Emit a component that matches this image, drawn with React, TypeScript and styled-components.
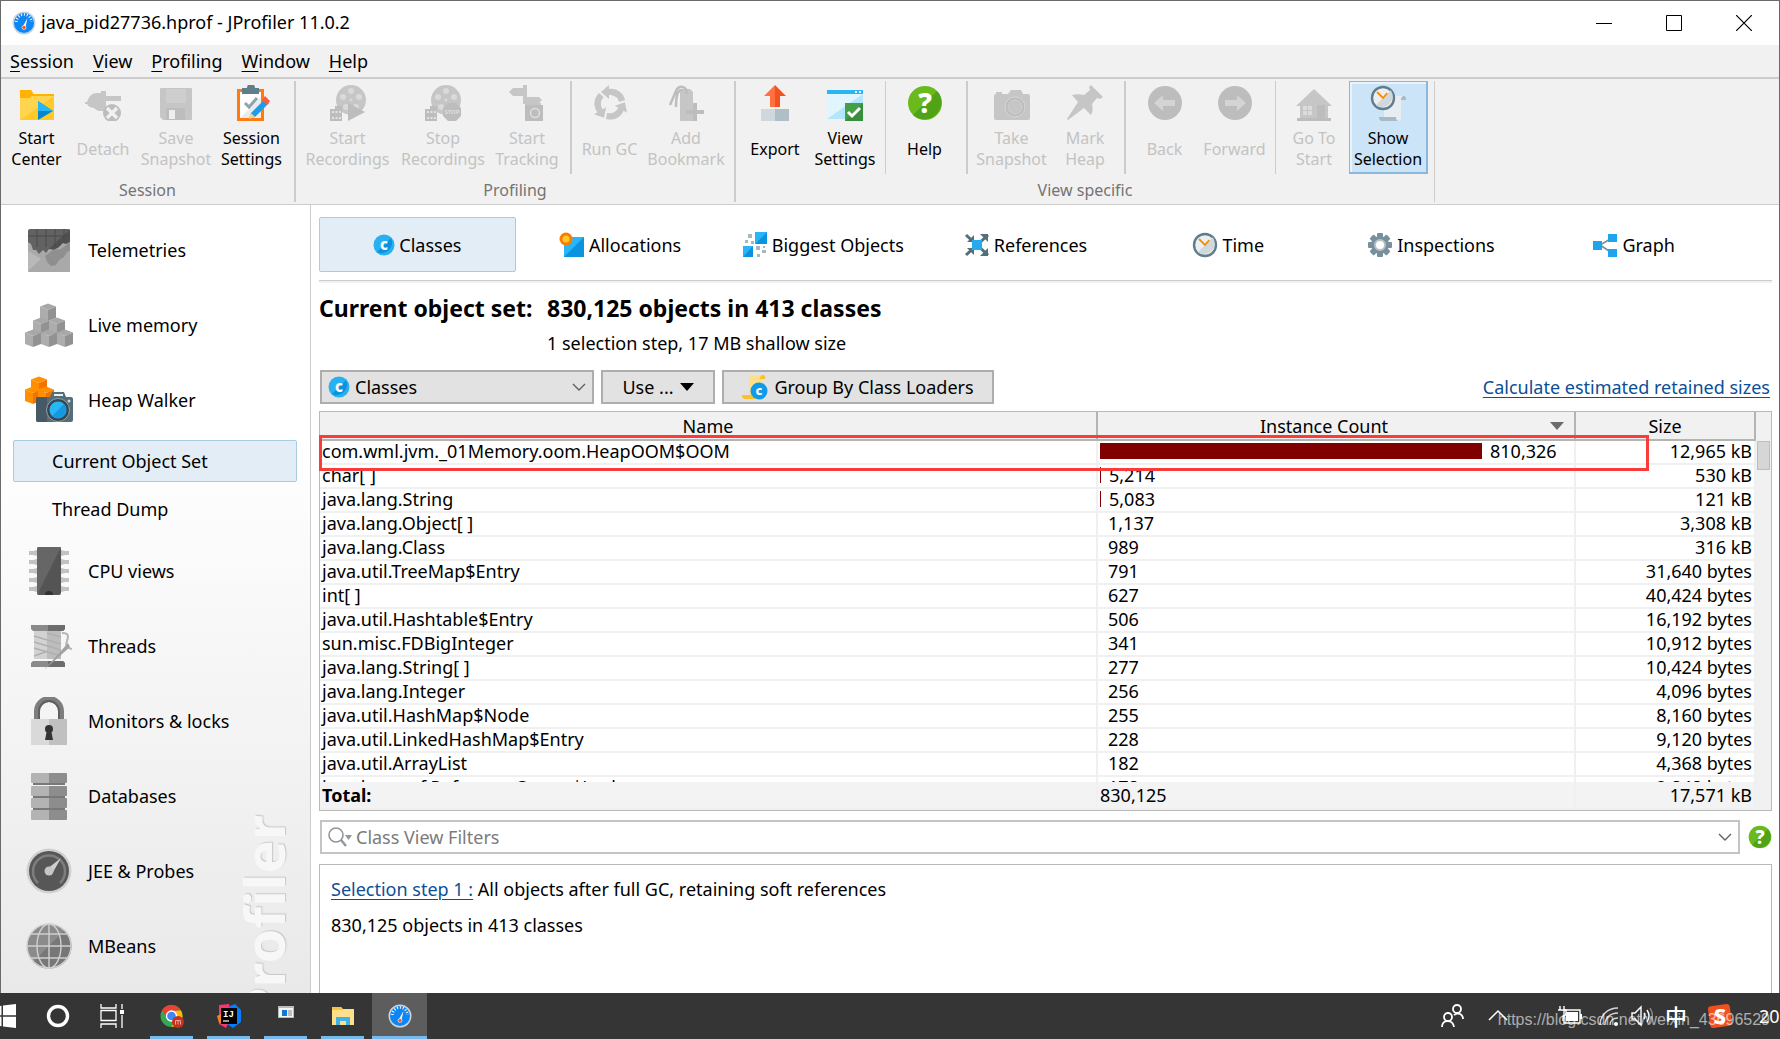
import React from "react";
import styled, { createGlobalStyle, css } from "styled-components";

const GlobalStyle = createGlobalStyle`
  *, *::before, *::after { box-sizing: border-box; }
  html, body, #root { height: 100%; }
  body {
    margin: 0;
    overflow: hidden;
    background: #fff;
    color: #000;
    font-family: "Noto Sans", "Open Sans", "Noto Sans CJK SC", sans-serif;
    font-size: 18px;
    line-height: 24px;
  }
  button, select, input { font: inherit; color: inherit; margin: 0; }
  svg { display: block; flex: none; }
`;

/* ---------- window ---------- */

const Desktop = styled.div`
  display: flex;
  flex-direction: column;
  height: 100vh;
`;

const AppWindow = styled.div`
  flex: 1;
  min-height: 0;
  display: flex;
  flex-direction: column;
  border: 1px solid #6a6a6a;
  border-bottom: 0;
`;

const TitleBar = styled.header`
  display: flex;
  align-items: center;
  height: 44px;
  padding-left: 11px;
  gap: 5px;
`;

const Title = styled.h1`
  flex: 1;
  margin: 0;
  padding-bottom: 2px;
  font-size: 18px;
  font-weight: 400;
`;

const WindowControls = styled.div`
  display: flex;
`;

const WindowButton = styled.button`
  display: flex;
  align-items: center;
  justify-content: center;
  width: 70px;
  height: 44px;
  padding: 0;
  border: 0;
  background: none;
`;

const MenuBar = styled.nav`
  display: flex;
  gap: 19px;
  height: 34px;
  padding: 4px 9px;
  background: #f1f1f1;
  border-bottom: 2px solid #ccc;
`;

const MenuItem = styled.button`
  padding: 0;
  border: 0;
  background: none;
  u { text-decoration-thickness: 1px; text-underline-offset: 3px; }
`;

/* ---------- toolbar ---------- */

const Toolbar = styled.div`
  display: flex;
  height: 126px;
  padding: 2px 0;
  background: #f1f1f1;
  border-bottom: 1px solid #ccc;
`;

const ToolGroup = styled.div<{ $thin?: boolean }>`
  display: flex;
  flex-direction: column;
  align-items: stretch;
  border-right: ${(p) => (p.$thin ? 1 : 2)}px solid #ccc;
`;

const ToolRow = styled.div`
  display: flex;
  height: 94px;
`;

const ToolSet = styled.div<{ $divider?: number }>`
  display: flex;
  padding: 0 6px 0 3px;
  border-right: ${(p) => p.$divider || 0}px solid #ccc;
`;

const ToolButton = styled.button<{ $width: number; $pressed?: boolean }>`
  display: flex;
  flex-direction: column;
  align-items: center;
  gap: 7px;
  width: ${(p) => p.$width}px;
  padding: 3px 0 0;
  border: 1px solid transparent;
  background: none;
  font-size: 16px;
  line-height: 21px;
  white-space: nowrap;
  &:disabled { color: #c3c3c3; }
  ${(p) =>
    p.$pressed &&
    css`
      border: 1px solid #8ab8dc;
      border-bottom-width: 2px;
      border-right-width: 2px;
      background: #cce4f7;
      box-shadow: inset 2px 2px 0 #e9f3fb;
    `}
`;

const ToolLabel = styled.span`
  display: flex;
  flex-direction: column;
  justify-content: center;
  height: 42px;
`;

const GroupLabel = styled.div`
  padding-top: 4px;
  color: #747474;
  font-size: 16px;
  line-height: 24px;
  text-align: center;
`;

/* ---------- body ---------- */

const Body = styled.div`
  flex: 1;
  min-height: 0;
  display: flex;
`;

const Sidebar = styled.nav`
  position: relative;
  flex: 0 0 310px;
  padding-top: 7px;
  overflow: hidden;
  border-right: 1px solid #ccc;
  background: linear-gradient(#fff 0%, #fff 30%, #e9e9e9 100%);
`;

const SideItem = styled.button`
  display: flex;
  align-items: center;
  gap: 15px;
  width: 100%;
  height: 75px;
  padding: 0 24px;
  border: 0;
  background: none;
  text-align: left;
`;

const SubItems = styled.div`
  display: flex;
  flex-direction: column;
  gap: 6px;
  padding: 3px 13px 3px 12px;
`;

const SubItem = styled.button<{ $selected?: boolean }>`
  height: 42px;
  padding: 0 38px;
  border: 1px solid ${(p) => (p.$selected ? "#a9cbe4" : "transparent")};
  border-radius: 2px;
  background: ${(p) => (p.$selected ? "#e3edf6" : "none")};
  text-align: left;
`;

const Brand = styled.div`
  position: absolute;
  right: 18px;
  top: 610px;
  writing-mode: vertical-rl;
  transform: rotate(180deg);
  color: #f7f7f7;
  font-size: 56px;
  font-weight: 700;
  line-height: 58px;
  text-shadow: 1px 1px 1px #c8c8c8;
  pointer-events: none;
`;

const Main = styled.main`
  flex: 1;
  min-width: 0;
  display: flex;
  flex-direction: column;
  padding: 12px 7px 0 8px;
`;

const Tabs = styled.div`
  display: flex;
  gap: 6px;
  padding: 0 40px 8px 0;
  border-bottom: 1px solid #ccc;
  box-shadow: 0 2px 0 #f1f1f1;
`;

const Tab = styled.button<{ $active?: boolean }>`
  flex: 1 1 0;
  display: flex;
  align-items: center;
  justify-content: center;
  gap: 4px;
  height: 55px;
  padding: 0;
  border: 1px solid ${(p) => (p.$active ? "#a9cbe4" : "transparent")};
  border-radius: 2px;
  background: ${(p) => (p.$active ? "#e3edf6" : "none")};
  white-space: nowrap;
`;

const Summary = styled.section`
  display: grid;
  grid-template-columns: 214px 1fr;
  column-gap: 14px;
  row-gap: 9px;
  padding-top: 13px;
`;

const Heading = styled.h2`
  margin: 0;
  font-size: 23px;
  font-weight: 700;
  line-height: 28px;
  white-space: nowrap;
`;

const SummaryNote = styled.p`
  grid-column: 2;
  margin: 0;
`;

const Controls = styled.div`
  display: flex;
  align-items: center;
  gap: 7px;
  padding: 15px 2px 7px 1px;
`;

const frame = css`
  display: flex;
  align-items: center;
  height: 34px;
  border: 2px solid #adadad;
  background: #e2e2e2;
`;

const Dropdown = styled.label`
  ${frame}
  width: 274px;
  gap: 5px;
  padding: 0 6px;
`;

const DropdownSelect = styled.select`
  flex: 1;
  padding: 0;
  border: 0;
  outline: 0;
  background: transparent;
  appearance: none;
`;

const PushButton = styled.button<{ $width: number }>`
  ${frame}
  justify-content: center;
  gap: 6px;
  width: ${(p) => p.$width}px;
  padding: 0;
  white-space: nowrap;
`;

const Link = styled.a`
  color: #0b4f96;
  text-decoration-thickness: 1px;
  text-underline-offset: 3px;
`;

const RetainedLink = styled(Link)`
  margin-left: auto;
`;

/* ---------- table ---------- */

const TableFrame = styled.section`
  position: relative;
  flex: 1;
  min-height: 0;
  display: flex;
  border: 1px solid #b9b9b9;
`;

const TableViewport = styled.div`
  flex: 1;
  overflow: hidden;
`;

const DataTable = styled.table`
  width: 100%;
  table-layout: fixed;
  border-collapse: separate;
  border-spacing: 0;
`;

const NumberCol = styled.col<{ $width: number }>`
  width: ${(p) => p.$width}px;
`;

const HeadCell = styled.th`
  height: 29px;
  padding: 3px 0 2px;
  border-right: 2px solid #b4b4b0;
  border-bottom: 2px solid #b4b4b0;
  background: #f1f1f1;
  font-weight: 400;
  line-height: 22px;
`;

const SortableHead = styled.div`
  display: grid;
  grid-template-columns: 1fr 20px;
  align-items: center;
  padding-right: 4px;
`;

const Cell = styled.td<{ $right?: boolean }>`
  height: 24px;
  padding: 0 2px 2px;
  border-right: 2px solid #f0f0f0;
  border-bottom: 2px solid #f0f0f0;
  line-height: 20px;
  text-align: ${(p) => (p.$right ? "right" : "left")};
  white-space: nowrap;
`;

const CountCell = styled.div`
  display: flex;
  align-items: center;
  gap: 7px;
`;

const Bar = styled.span`
  height: 16px;
  border-right: 1px solid #fff;
  background: #800000;
`;

const TotalCell = styled(Cell)<{ $bold?: boolean }>`
  position: sticky;
  bottom: 0;
  height: 28px;
  padding: 2px;
  background: #f3f3f3;
  font-weight: ${(p) => (p.$bold ? 700 : 400)};
`;

const ScrollTrack = styled.div`
  width: 15px;
  padding: 29px 1px 0;
  background: #f1f1f1;
`;

const ScrollThumb = styled.div`
  height: 29px;
  border: 1px solid #bdbdbd;
  background: #d6d6d6;
`;

const Highlight = styled.div`
  position: absolute;
  left: -1px;
  top: 23px;
  right: 122px;
  height: 36px;
  border: 3px solid #fb3a3a;
  pointer-events: none;
`;

/* ---------- filter and details ---------- */

const FilterRow = styled.div`
  display: flex;
  align-items: center;
  gap: 8px;
  padding: 9px 0 10px 1px;
`;

const FilterBox = styled.label`
  flex: 1;
  display: flex;
  align-items: center;
  gap: 4px;
  height: 34px;
  padding: 0 6px;
  border: 2px solid #c4c4c4;
`;

const FilterInput = styled.input`
  flex: 1;
  padding: 0;
  border: 0;
  outline: 0;
  &::placeholder { color: #7b7b7b; opacity: 1; }
`;

const IconButton = styled.button`
  padding: 0;
  border: 0;
  background: none;
`;

const Details = styled.section`
  flex: 0 0 129px;
  display: flex;
  flex-direction: column;
  gap: 12px;
  padding: 12px 11px;
  border: 1px solid #b9b9b9;
  border-bottom: 0;
  p { margin: 0; }
`;

/* ---------- taskbar ---------- */

const Taskbar = styled.footer`
  position: relative;
  display: flex;
  justify-content: space-between;
  height: 46px;
  overflow: hidden;
  background: #353535;
`;

const TaskSide = styled.div`
  display: flex;
`;

const Task = styled.button<{ $width: number; $after?: number }>`
  display: flex;
  align-items: center;
  justify-content: center;
  width: ${(p) => p.$width}px;
  margin-right: ${(p) => p.$after || 0}px;
  padding: 0;
  border: 0;
  background: none;
  color: #fff;
`;

const RunningTask = styled(Task)<{ $active?: boolean }>`
  padding-top: 3px;
  border-bottom: 3px solid #76b9ed;
  background: ${(p) => (p.$active ? "#5d5d5d" : "none")};
`;

const TrayText = styled.span`
  display: flex;
  align-items: center;
  justify-content: center;
  width: 44px;
  color: #fff;
  font-size: 22px;
  font-weight: 500;
`;

const Clock = styled.span`
  align-self: center;
  width: 38px;
  padding-left: 17px;
  overflow: hidden;
  color: #fff;
`;

const UrlMark = styled.span`
  position: absolute;
  right: 10px;
  bottom: 7px;
  color: rgba(255, 255, 255, 0.6);
  font-family: "Liberation Sans", Arial, sans-serif;
  font-size: 16px;
`;

/* ---------- icons ---------- */

const GREY = "#c6c6c6";
const GREY_DARK = "#bdbdbd";
const GREY_LIGHT = "#d6d6d6";

const Svg = ({ s, children }: { s: number; children: React.ReactNode }) => (
  <svg width={s} height={s} viewBox={`0 0 ${s} ${s}`} aria-hidden="true">
    {children}
  </svg>
);

const GaugeLogo = () => (
  <Svg s={24}>
    <circle cx="12" cy="12" r="11.5" fill="#c9d3dc" />
    <circle cx="12" cy="12" r="10" fill="#0d86f5" />
    <path d="M4.500 11a7.500 7.500 0 0 1 15 0" fill="none" stroke="#fff" strokeWidth="2.600" strokeDasharray="1 1.900" />
    <path d="M15.500 7l-5 9 2.800 1z" fill="#fff" />
    <circle cx="12" cy="16.500" r="2" fill="#f4511e" stroke="#fff" strokeWidth="0.600" />
  </Svg>
);

const StartCenterIcon = () => (
  <Svg s={36}>
    <path d="M1 5h11l3 4h20v26H1z" fill="#ffca28" />
    <path d="M1 5h11l2 4-3 4H1z" fill="#ffb300" />
    <path d="M14 9h21v2H12z" fill="#ffb300" />
    <path d="M1 35V13h10l2-2h22z" fill="#ffd54f" />
    <path d="M19 16v19l15-9z" fill="#0288d1" />
    <path d="M19 16v10h15z" fill="#29b6f6" />
  </Svg>
);

const DetachIcon = () => (
  <Svg s={36}>
    <path d="M0 17h2c2-6 5-9 10-9h4V6h5v5h15v5H21v7h-6c-6 1-11 0-13-4H0z" fill={GREY} />
    <path d="M8 11h13v15h-6c-4 0-7-3-7-7z" fill={GREY} />
    <circle cx="27" cy="28" r="9" fill={GREY_DARK} />
    <path d="M22 23l10 10M32 23L22 33" stroke="#f1f1f1" strokeWidth="3.400" />
  </Svg>
);

const SaveIcon = () => (
  <Svg s={36}>
    <path d="M2 4q0-1 1-1h30q1 0 1 1v30q0 1-1 1H5l-3-3z" fill={GREY} />
    <path d="M8 4h20v14H8z" fill="#cecece" />
    <path d="M8 23h19v12H8z" fill={GREY_DARK} />
    <path d="M11 25h6v9h-6z" fill="#eee" />
  </Svg>
);

const SessionSettingsIcon = () => (
  <Svg s={36}>
    <path d="M3 4h27v32H3z" fill="#ff7a0f" />
    <path d="M6 7h21v26H6z" fill="#fff" />
    <path d="M27 12v21H6z" fill="#e8ecef" />
    <path d="M8 9V3h5a4 4 0 0 1 8 0h4v6z" fill="#607d8b" />
    <path d="M11 18l4 4 8-9" fill="none" stroke="#90a4ae" strokeWidth="3" />
    <path d="M31 14l4 4-14 14-6 2 2-6z" fill="#1e9be9" />
    <path d="M31 11l5 5-3 4-5-5z" fill="#ff5a3c" />
    <path d="M17 28l4 4-6 2z" fill="#ffd180" />
  </Svg>
);

const FilmReel = () => (
  <>
    <circle cx="21" cy="15" r="15" fill={GREY} />
    <g fill="#dadada">
      <circle cx="21" cy="6" r="3" />
      <circle cx="13" cy="12" r="3" />
      <circle cx="29" cy="12" r="3" />
      <circle cx="16" cy="22" r="3" />
      <circle cx="26" cy="22" r="3" />
      <circle cx="21" cy="15" r="1.400" />
    </g>
    <path d="M0 24h5v-3h7v15H0z" fill={GREY_DARK} />
    <path d="M2 27h9M2 33h9" stroke="#eee" strokeWidth="1.500" strokeDasharray="2 1.500" />
  </>
);

const StartRecIcon = () => (
  <Svg s={36}>
    <FilmReel />
    <path d="M18 18v18l17-9z" fill={GREY_DARK} />
  </Svg>
);

const StopRecIcon = () => (
  <Svg s={36}>
    <FilmReel />
    <path d="M23 18h8l5 5v8l-5 5h-8l-5-5v-8z" fill={GREY_DARK} />
    <text x="27" y="29" fontSize="6" fontWeight="700" textAnchor="middle" fill="#dedede">STOP</text>
  </Svg>
);

const TrackingIcon = () => (
  <Svg s={36}>
    <path d="M0 7l4-4h10V0h4v12h12l3 3-3 3h2v18H16V19h-2v-8H4z" fill={GREY} />
    <path d="M16 20h18v16H16z" fill={GREY_DARK} />
    <circle cx="26" cy="28" r="4.500" fill="none" stroke="#dedede" strokeWidth="1.500" />
  </Svg>
);

const RunGcIcon = () => (
  <Svg s={36}>
    <g fill={GREY}>
      {[0, 120, 240].map((a) => (
        <g key={a} transform={`rotate(${a} 18 19)`}>
          <path d="M17 0v4c7-1 14 3 16 11l-6 2c-1-5-5-7-10-7v4L9 7z" />
        </g>
      ))}
    </g>
  </Svg>
);

const BookmarkIcon = () => (
  <Svg s={36}>
    <path d="M12 7l3-3h7l3 3v29H12z" fill={GREY} />
    <path d="M19 9c0-8-8-10-11-3L2 20M15 5C9 4 8 12 8 22" fill="none" stroke={GREY_DARK} strokeWidth="2.500" />
    <path d="M25 18h4v7h7v4h-7v7h-4v-7h-7v-4h7z" fill={GREY_DARK} />
  </Svg>
);

const ExportIcon = () => (
  <Svg s={36}>
    <path d="M18 0L7 11h6v11h5z" fill="#ff7043" />
    <path d="M18 0l11 11h-6v11h-5z" fill="#f4511e" />
    <path d="M4 24h14v12H4z" fill="#cfd8dc" />
    <path d="M18 24h14v12H18z" fill="#b0bec5" />
  </Svg>
);

const ViewSettingsIcon = () => (
  <Svg s={36}>
    <path d="M0 5h36v29H0z" fill="#b3e5fc" />
    <path d="M0 9h36L0 34z" fill="#e1f5fe" />
    <path d="M0 5h36v4H0z" fill="#29b6f6" />
    <path d="M28 6h2v2h-2zM32 6h2v2h-2z" fill="#fff" />
    <path d="M18 18h18v18H18z" fill="#388e3c" />
    <path d="M18 18h18L18 36z" fill="#43a047" />
    <path d="M21 27l4 4 8-8" fill="none" stroke="#fff" strokeWidth="3" />
  </Svg>
);

const HelpIcon = ({ s = 36 }: { s?: number }) => (
  <svg width={s} height={s} viewBox="0 0 36 36" aria-hidden="true">
    <circle cx="18" cy="18" r="17" fill="#6aba1d" />
    <path d="M30 6A17 17 0 0 1 6 30z" fill="#50a316" />
    <text x="18" y="28" fontSize="28" fontWeight="800" textAnchor="middle" fill="#fff">?</text>
  </svg>
);

const TakeSnapshotIcon = () => (
  <Svg s={36}>
    <path d="M0 11q0-2 2-2V7h6v2h6l3-4h10l2 4h5q2 0 2 2v22q0 2-2 2H2q-2 0-2-2z" fill={GREY} />
    <circle cx="21" cy="22" r="10" fill={GREY_DARK} stroke={GREY_LIGHT} strokeWidth="1" />
    <circle cx="21" cy="22" r="7" fill={GREY} stroke="#d0d0d0" />
  </Svg>
);

const PinIcon = () => (
  <Svg s={36}>
    <path d="M24 0l12 12-3 2-3-1-5 6c1 4 1 7-1 11l-7-7L1 35l-1-1 11-17-6-7c4-1 8-1 12 0l6-5-1-3z" fill={GREY} />
  </Svg>
);

const ArrowIcon = ({ flip }: { flip?: boolean }) => (
  <Svg s={36}>
    <circle cx="18" cy="18" r="17" fill={GREY_DARK} />
    <g transform={flip ? "matrix(-1 0 0 1 36 0)" : undefined}>
      <path d="M7 18l9-8v5h12v6H16v5z" fill="#d4d4d4" />
    </g>
  </Svg>
);

const HomeIcon = () => (
  <Svg s={36}>
    <path d="M18 4l18 17h-4v13H4V21H0z" fill={GREY} />
    <path d="M1 33h34v3H1z" fill={GREY_DARK} />
    <path d="M21 20h8v13h-8z" fill={GREY_DARK} />
    <path d="M7 21h4v4H7zM12 21h4v4h-4zM7 26h4v4H7zM12 26h4v4h-4z" fill="#dcdcdc" />
  </Svg>
);

const ClockFace = ({ cx, cy, r }: { cx: number; cy: number; r: number }) => (
  <>
    <circle cx={cx} cy={cy} r={r - 1} fill="#eceff1" stroke="#607d8b" strokeWidth="2.400" />
    <path
      d={`M${cx + r * 0.65} ${cy - r * 0.65}A${r * 0.9} ${r * 0.9} 0 0 1 ${cx - r * 0.6} ${cy + r * 0.6}z`}
      fill="#cfd8dc"
    />
    <path
      d={`M${cx - r * 0.5} ${cy - r * 0.5}L${cx} ${cy}L${cx + r * 0.35} ${cy - r * 0.4}`}
      fill="none"
      stroke="#fb8c00"
      strokeWidth="1.800"
    />
  </>
);

const ShowSelectionIcon = () => (
  <Svg s={36}>
    <path d="M14 11h20v4h-3v18q0 3-3 3H14z" fill="#e8edf1" />
    <path d="M31 15q0-4 3-4 2 0 2 4zM9 32h17q0 4 3 4H12q-3 0-3-4z" fill="#a9bac4" />
    <ClockFace cx={13} cy={13} r={12} />
  </Svg>
);

const Cube = ({ x, y, c }: { x: number; y: number; c: string[] }) => (
  <g transform={`translate(${x} ${y})`}>
    <path d="M0-8.500L8-5.500 0-2-8-5.500z" fill={c[0]} />
    <path d="M-8-5.500L0-2v11L-8 6z" fill={c[1]} />
    <path d="M8-5.500L0-2v11L8 6z" fill={c[2]} />
  </g>
);

const GREY_CUBE = ["#a8a8a8", "#adadad", "#929292"];
const ORANGE_CUBE = ["#ff9100", "#ff8f00", "#f57200"];

const TelemetriesIcon = () => (
  <Svg s={48}>
    <rect x="3" y="3" width="42" height="43" rx="2" fill="#626262" />
    <path d="M45 3v20H24z" fill="#505050" />
    <path d="M3 10h42M12 3v18M21 3v18M30 3v18M39 3v18" stroke="#4a4a4a" />
    <path d="M3 16l3 2 2 6 3 0 3 4 4-4 3 3 3-4 5 1 5-3 4-4 3 1 4-2v28q0 2-2 2H5q-2 0-2-2z" fill="#a9a9a9" />
    <path d="M20 30l8-6 8-1 9-7v9l-3 1-3 5-5 3-3 5-5 1-4-4z" fill="#8f8f8f" />
    <path d="M3 45V25l13 8z" fill="#b9b9b9" />
  </Svg>
);

const LiveMemoryIcon = () => (
  <Svg s={48}>
    <Cube x={23} y={11} c={GREY_CUBE} />
    <Cube x={16} y={25} c={GREY_CUBE} />
    <Cube x={32} y={25} c={GREY_CUBE} />
    <Cube x={8} y={37} c={GREY_CUBE} />
    <Cube x={24} y={37} c={GREY_CUBE} />
    <Cube x={40} y={37} c={GREY_CUBE} />
  </Svg>
);

const HeapWalkerIcon = () => (
  <Svg s={48}>
    <Cube x={14} y={9} c={ORANGE_CUBE} />
    <Cube x={8} y={19} c={ORANGE_CUBE} />
    <Cube x={21} y={19} c={ORANGE_CUBE} />
    <path d="M11 23q0-2 2-2h12l2-5h12l2 5h5q2 0 2 2v21q0 2-2 2H13q-2 0-2-2z" fill="#546e7a" />
    <path d="M11 23q0-2 2-2h9v25h-9q-2 0-2-2z" fill="#455a64" />
    <path d="M29 18h9v2h-9z" fill="#eceff1" />
    <circle cx="33" cy="34" r="11.500" fill="#37474f" stroke="#90a4ae" />
    <circle cx="33" cy="34" r="8.500" fill="#29b6f6" />
    <path d="M39 28a8.500 8.500 0 0 1-12 12z" fill="#1499e0" />
    <circle cx="44" cy="25" r="1.500" fill="#cfd8dc" />
  </Svg>
);

const CpuIcon = () => (
  <Svg s={48}>
    {[6, 15, 24, 33, 42].map((y) => (
      <path
        key={y}
        d={`M4 ${y - 2}h4l4-1v6l-4-1H4zM44 ${y - 2}h-4l-4-1v6l4-1h4z`}
        fill="#c2c2c2"
      />
    ))}
    <rect x="12" y="0" width="24" height="48" rx="2" fill="#545454" />
    <path d="M12 46V2q0-2 2-2h22L14 44v4q-2 0-2-2z" fill="#666" />
    <path d="M20 48a4 4 0 0 1 8 0z" fill="#333" />
  </Svg>
);

const ThreadsIcon = () => (
  <Svg s={48}>
    <path d="M9 9h27v28H9z" fill="#d2d2d2" />
    <path d="M22 9h14v28H22z" fill="#bdbdbd" />
    <path d="M9 14l27 8M9 20l27 8M9 26l27 8M22 11l14 4M9 34l14-5" stroke="#b0b0b0" strokeWidth="1.500" />
    <path d="M6 3h34v4l-2 2H8L6 7zM6 45h34v-4l-2-2H8l-2 2z" fill="#8a8a8a" />
    <path d="M23 3h17v4l-2 2H23zM23 45h17v-4l-2-2H23z" fill="#6d6d6d" />
    <path d="M37 11c6 0 7 2 5 8-2 5 0 7 5 8" fill="none" stroke="#b4b4b4" strokeWidth="2" />
    <path d="M43 21l2 4-26 23z" fill="#a2a2a2" />
  </Svg>
);

const LockIcon = () => (
  <Svg s={48}>
    <path d="M12 24V14a12 12 0 0 1 24 0v10" fill="none" stroke="#7e7e7e" strokeWidth="6" />
    <path d="M14 24V14a10 10 0 0 1 20 0v10" fill="none" stroke="#606060" strokeWidth="2" />
    <path d="M6 22h36v26H6z" fill="#d9d9d9" />
    <path d="M24 22h18v26H24z" fill="#c0c0c0" />
    <circle cx="24" cy="32" r="4" fill="#333" />
    <path d="M22 33h4l2 10h-8z" fill="#333" />
  </Svg>
);

const DatabaseIcon = () => (
  <Svg s={48}>
    {[1, 14, 26, 38].map((y) => (
      <g key={y}>
        <path d={`M6 ${y + 1}q0-1 1-1h17v10H7q-1 0-1-1z`} fill="#b3b3b3" />
        <path d={`M24 ${y}h17q1 0 1 1v8q0 1-1 1H24z`} fill="#8d8d8d" />
        {y < 38 && <path d={`M8 ${y + 10}h32v2H8z`} fill="#787878" />}
      </g>
    ))}
  </Svg>
);

const ProbesIcon = () => (
  <Svg s={48}>
    <circle cx="24" cy="24" r="22.500" fill="#d0d0d0" />
    <circle cx="24" cy="24" r="20" fill="#575757" />
    <path d="M13 36a16 16 0 1 1 22 0" fill="none" stroke="#7e7e7e" strokeWidth="2.500" />
    <path d="M36 11L27 27l-5-5z" fill="#d0d0d0" />
    <circle cx="24" cy="24" r="4.500" fill="#c6c6c6" />
  </Svg>
);

const MBeansIcon = () => (
  <Svg s={48}>
    <circle cx="24" cy="24" r="22" fill="#8b8b8b" />
    <path d="M40 8A22 22 0 0 1 8 40z" fill="#777" />
    <g fill="none" stroke="#d0d0d0" strokeWidth="1.400">
      <circle cx="24" cy="24" r="22" />
      <ellipse cx="24" cy="24" rx="12" ry="22" />
      <path d="M24 2v44M2 24h44M6 12h36M6 36h36" />
    </g>
  </Svg>
);

const ClassIcon = () => (
  <Svg s={22}>
    <circle cx="11" cy="11" r="10.500" fill="#29b0f0" />
    <path d="M18 4A10.500 10.500 0 0 1 4 18z" fill="#0b93e0" />
    <text x="11" y="16" fontSize="15" fontWeight="800" textAnchor="middle" fill="#fff">c</text>
  </Svg>
);

const AllocationsIcon = () => (
  <Svg s={26}>
    <path d="M5 5h20v20H5z" fill="#0b93e0" />
    <path d="M5 5h20L5 25z" fill="#29b6f6" />
    <circle cx="7" cy="7" r="6.500" fill="#fb7d00" />
    <circle cx="7" cy="7" r="3.500" fill="#ffca28" />
  </Svg>
);

const BiggestIcon = () => (
  <Svg s={26}>
    <path d="M13 0h12v12H13zM1 14h10v11H1z" fill="#29b6f6" />
    <path d="M25 0v12H13zM11 14v11H1z" fill="#0b93e0" />
    <path d="M6 2h4v4H6zM3 8h3v3H3zM9 9h3v3H9zM14 14h4v4h-4zM20 18h4v3h-4zM15 22h3v3h-3zM21 14h2v2h-2z" fill="#a9b7bf" />
  </Svg>
);

const ReferencesIcon = () => (
  <Svg s={26}>
    <path d="M2 3l22 20M24 3L2 23" stroke="#546e7a" strokeWidth="3" />
    <path d="M24 2v8l-8-8zM24 24v-8l-8 8zM10 10V3l-7 7zM10 16v7l-7-7z" fill="#546e7a" />
    <path d="M8 8h10v10H8z" fill="#29a9ee" />
  </Svg>
);

const TimeIcon = () => (
  <Svg s={26}>
    <ClockFace cx={13} cy={13} r={12} />
  </Svg>
);

const GearIcon = () => (
  <Svg s={26}>
    <g fill="#78909c">
      {[0, 45, 90, 135].map((a) => (
        <rect key={a} x="10" y="1" width="6" height="24" rx="1" transform={`rotate(${a} 13 13)`} />
      ))}
      <circle cx="13" cy="13" r="9" />
    </g>
    <circle cx="13" cy="13" r="5" fill="#fff" stroke="#b7c3c9" strokeWidth="2" />
  </Svg>
);

const GraphIcon = () => (
  <Svg s={26}>
    <path d="M20 6L8 13l12 8" fill="none" stroke="#78909c" strokeWidth="1.600" />
    <path d="M1 9h9v9H1zM16 2h9v8h-9zM16 17h9v8h-9z" fill="#1ea5ee" />
  </Svg>
);

const LoaderIcon = () => (
  <Svg s={26}>
    <path d="M7 1h14v4h-2v20H3q-2 0-2-4h6z" fill="#ffdf87" />
    <path d="M0 21h13v4H3q-3 0-3-4zM18 5q0-4 3-4t2 4z" fill="#fbc02d" />
    <g transform="translate(8 7)">
      <circle cx="9" cy="10" r="8.500" fill="#0f9be8" />
      <text x="9" y="14" fontSize="13" fontWeight="800" textAnchor="middle" fill="#fff">c</text>
    </g>
  </Svg>
);

const ChevronDown = () => (
  <svg width="14" height="9" viewBox="0 0 14 9" aria-hidden="true">
    <path d="M1 1l6 6 6-6" fill="none" stroke="#606060" strokeWidth="1.400" />
  </svg>
);

const Triangle = ({ fill }: { fill: string }) => (
  <svg width="14" height="8" viewBox="0 0 14 8" aria-hidden="true">
    <path d="M0 0h14L7 8z" fill={fill} />
  </svg>
);

const SearchIcon = () => (
  <svg width="24" height="20" viewBox="0 0 24 20" aria-hidden="true">
    <circle cx="8" cy="8" r="7" fill="none" stroke="#8e979d" strokeWidth="1.600" />
    <path d="M13 13l5 6" stroke="#8e979d" strokeWidth="2.400" />
    <path d="M17 8h7l-3.500 5z" fill="#8e979d" />
  </svg>
);

const WindowsIcon = () => (
  <svg width="16" height="24" viewBox="0 0 16 24" aria-hidden="true">
    <path d="M0 2l1.500-.3v9.500H0zM3 1.500L16 0v11.300H3zM0 12.700h1.500v9.500L0 22zM3 12.700h13V24L3 22.400z" fill="#fff" />
  </svg>
);

const CortanaIcon = () => (
  <Svg s={24}>
    <circle cx="12" cy="12" r="9.500" fill="none" stroke="#fff" strokeWidth="3.400" />
  </Svg>
);

const TaskViewIcon = () => (
  <Svg s={26}>
    <path d="M2 1v4h15V1M2 25v-4h15v4M2 7.500h15v10H2zM23 1v5M23 12v13" fill="none" stroke="#fff" strokeWidth="1.300" />
    <path d="M21 7h4v4h-4z" fill="#fff" />
  </Svg>
);

const ChromeIcon = () => (
  <Svg s={24}>
    <circle cx="11.500" cy="12" r="11" fill="#34a853" />
    <path d="M2 6.500A11 11 0 0 1 21 6.500L12 7 7 14z" fill="#ea4335" />
    <path d="M21 6.500A11 11 0 0 1 11.500 23l4.500-9-4-7z" fill="#fbbc05" />
    <circle cx="11.500" cy="12" r="5" fill="#4285f4" stroke="#fff" strokeWidth="1.400" />
    <circle cx="18" cy="18" r="6" fill="#c5311c" />
    <path d="M15.500 20.500v-4h5v4M18 17v3.500" fill="none" stroke="#f2a398" />
  </Svg>
);

const IntellijIcon = () => (
  <Svg s={24}>
    <path d="M2 1l10-1 3 12-6 12-7-4z" fill="#f9356f" />
    <path d="M0 12l6-3 2 8-6 2z" fill="#fc801d" />
    <path d="M13 2l5-2 6 6v12l-8 6-6-4z" fill="#087cfa" />
    <path d="M4 4h16v16H4z" fill="#000" />
    <text x="6" y="13" fontSize="9" fontWeight="700" fontFamily="Liberation Mono, monospace" fill="#fff">IJ</text>
    <path d="M6 17h6" stroke="#fff" strokeWidth="1.200" />
  </Svg>
);

const PanelIcon = () => (
  <Svg s={24}>
    <path d="M4 2h16v12H4z" fill="#b9bdc1" />
    <path d="M5 4h14v9H5z" fill="#f5f5f5" />
    <path d="M8 6h5v6H8z" fill="#1278d4" />
    <path d="M14 7h4M14 9h4M14 11h4" stroke="#888" />
  </Svg>
);

const ExplorerIcon = () => (
  <Svg s={24}>
    <path d="M1 3h9l2 2h11v16H1z" fill="#ffe08a" />
    <path d="M1 3h9l2 3H1z" fill="#f8c43a" />
    <path d="M5 21v-8h14v8h-4v-4H9v4z" fill="#3fb2e8" />
  </Svg>
);

const PeopleIcon = () => (
  <Svg s={24}>
    <g fill="none" stroke="#fff" strokeWidth="1.800">
      <circle cx="16" cy="5" r="4" />
      <circle cx="7" cy="13" r="4" />
      <path d="M1 23c0-8 11-8 12 0M13 11c4-3 9-1 9 4" />
    </g>
  </Svg>
);

const TrayChevron = () => (
  <Svg s={20}>
    <path d="M1 14l9-9 9 9" fill="none" stroke="#fff" strokeWidth="1.500" />
  </Svg>
);

const BatteryIcon = () => (
  <Svg s={24}>
    <path d="M6 6h16v13H6z" fill="none" stroke="#fff" strokeWidth="1.400" />
    <path d="M8 8h12v9H8zM22 10h2v5h-2z" fill="#fff" />
    <path d="M2 2v4M6 2v4M0 6h8v3q0 3-3 3v5" fill="none" stroke="#fff" strokeWidth="1.400" />
  </Svg>
);

const WifiIcon = () => (
  <Svg s={22}>
    <g fill="none" stroke="#d5d5d5" strokeWidth="1.400">
      <path d="M2 20C2 10 10 3 20 3M7 20c0-7 5-12 13-12M12 20c0-4 3-7 8-7" />
    </g>
    <circle cx="18" cy="19" r="2" fill="#fff" />
  </Svg>
);

const SpeakerIcon = () => (
  <Svg s={22}>
    <g fill="none" stroke="#fff" strokeWidth="1.400">
      <path d="M1 8h3l6-6v18l-6-6H1zM13 8q2 3 0 6M16 5q4 6 0 12" />
      <path d="M19 3q5 8 0 16" stroke="#888" />
    </g>
  </Svg>
);

const SogouIcon = () => (
  <Svg s={26}>
    <rect x="2" y="2" width="22" height="22" rx="3" fill="#f0501e" transform="rotate(-8 13 13)" />
    <text x="13" y="21" fontSize="22" fontWeight="800" textAnchor="middle" fill="#fff">S</text>
  </Svg>
);

/* ---------- data ---------- */

type Tool = { lines: string[]; width: number; icon: React.ReactNode; on?: boolean; pressed?: boolean };
type ToolSetData = { divider?: number; tools: Tool[] };

const toolGroups: { label: string; thin?: boolean; sets: ToolSetData[] }[] = [
  {
    label: "Session",
    sets: [
      {
        tools: [
          { lines: ["Start", "Center"], width: 65, icon: <StartCenterIcon />, on: true },
          { lines: ["Detach"], width: 68, icon: <DetachIcon /> },
          { lines: ["Save", "Snapshot"], width: 78, icon: <SaveIcon /> },
          { lines: ["Session", "Settings"], width: 73, icon: <SessionSettingsIcon />, on: true },
        ],
      },
    ],
  },
  {
    label: "Profiling",
    sets: [
      {
        divider: 2,
        tools: [
          { lines: ["Start", "Recordings"], width: 97, icon: <StartRecIcon /> },
          { lines: ["Stop", "Recordings"], width: 94, icon: <StopRecIcon /> },
          { lines: ["Start", "Tracking"], width: 74, icon: <TrackingIcon /> },
        ],
      },
      {
        tools: [
          { lines: ["Run GC"], width: 69, icon: <RunGcIcon /> },
          { lines: ["Add", "Bookmark"], width: 84, icon: <BookmarkIcon /> },
        ],
      },
    ],
  },
  {
    label: "View specific",
    thin: true,
    sets: [
      {
        divider: 1,
        tools: [
          { lines: ["Export"], width: 72, icon: <ExportIcon />, on: true },
          { lines: ["View", "Settings"], width: 68, icon: <ViewSettingsIcon />, on: true },
        ],
      },
      { divider: 2, tools: [{ lines: ["Help"], width: 71, icon: <HelpIcon />, on: true }] },
      {
        divider: 2,
        tools: [
          { lines: ["Take", "Snapshot"], width: 81, icon: <TakeSnapshotIcon /> },
          { lines: ["Mark", "Heap"], width: 66, icon: <PinIcon /> },
        ],
      },
      {
        divider: 1,
        tools: [
          { lines: ["Back"], width: 71, icon: <ArrowIcon /> },
          { lines: ["Forward"], width: 69, icon: <ArrowIcon flip /> },
        ],
      },
      {
        tools: [
          { lines: ["Go To", "Start"], width: 70, icon: <HomeIcon /> },
          { lines: ["Show", "Selection"], width: 79, icon: <ShowSelectionIcon />, on: true, pressed: true },
        ],
      },
    ],
  },
];

const sideTop = [
  { label: "Telemetries", icon: <TelemetriesIcon /> },
  { label: "Live memory", icon: <LiveMemoryIcon /> },
  { label: "Heap Walker", icon: <HeapWalkerIcon /> },
];

const sideBottom = [
  { label: "CPU views", icon: <CpuIcon /> },
  { label: "Threads", icon: <ThreadsIcon /> },
  { label: "Monitors & locks", icon: <LockIcon /> },
  { label: "Databases", icon: <DatabaseIcon /> },
  { label: "JEE & Probes", icon: <ProbesIcon /> },
  { label: "MBeans", icon: <MBeansIcon /> },
];

const tabs = [
  { label: "Classes", icon: <ClassIcon /> },
  { label: "Allocations", icon: <AllocationsIcon /> },
  { label: "Biggest Objects", icon: <BiggestIcon /> },
  { label: "References", icon: <ReferencesIcon /> },
  { label: "Time", icon: <TimeIcon /> },
  { label: "Inspections", icon: <GearIcon /> },
  { label: "Graph", icon: <GraphIcon /> },
];

const rows: [string, number, string][] = [
  ["com.wml.jvm._01Memory.oom.HeapOOM$OOM", 810326, "12,965 kB"],
  ["char[ ]", 5214, "530 kB"],
  ["java.lang.String", 5083, "121 kB"],
  ["java.lang.Object[ ]", 1137, "3,308 kB"],
  ["java.lang.Class", 989, "316 kB"],
  ["java.util.TreeMap$Entry", 791, "31,640 bytes"],
  ["int[ ]", 627, "40,424 bytes"],
  ["java.util.Hashtable$Entry", 506, "16,192 bytes"],
  ["sun.misc.FDBigInteger", 341, "10,912 bytes"],
  ["java.lang.String[ ]", 277, "10,424 bytes"],
  ["java.lang.Integer", 256, "4,096 bytes"],
  ["java.util.HashMap$Node", 255, "8,160 bytes"],
  ["java.util.LinkedHashMap$Entry", 228, "9,120 bytes"],
  ["java.util.ArrayList", 182, "4,368 bytes"],
  ["java.lang.ref.ReferenceQueue$Lock", 178, "2,848 bytes"],
];

const FULL_BAR = 383;
const barWidth = (count: number) => Math.round((count / rows[0][1]) * FULL_BAR);

/* ---------- page ---------- */

export default function App() {
  return (
    <Desktop>
      <GlobalStyle />
      <AppWindow>
        <TitleBar>
          <GaugeLogo />
          <Title>java_pid27736.hprof - JProfiler 11.0.2</Title>
          <WindowControls>
            <WindowButton aria-label="Minimize">
              <Svg s={16}><path d="M0 8.500h16" stroke="#000" /></Svg>
            </WindowButton>
            <WindowButton aria-label="Maximize">
              <Svg s={16}><path d="M.5.5h15v15H.5z" fill="none" stroke="#000" /></Svg>
            </WindowButton>
            <WindowButton aria-label="Close">
              <Svg s={16}><path d="M0 0l16 16M16 0L0 16" stroke="#000" strokeWidth="1.200" /></Svg>
            </WindowButton>
          </WindowControls>
        </TitleBar>
        <MenuBar>
          {["Session", "View", "Profiling", "Window", "Help"].map((m) => (
            <MenuItem key={m}>
              <u>{m[0]}</u>
              {m.slice(1)}
            </MenuItem>
          ))}
        </MenuBar>
        <Toolbar>
          {toolGroups.map((g) => (
            <ToolGroup key={g.label} $thin={g.thin}>
              <ToolRow>
                {g.sets.map((s, i) => (
                  <ToolSet key={i} $divider={s.divider}>
                    {s.tools.map((t) => (
                      <ToolButton key={t.lines.join(" ")} $width={t.width} $pressed={t.pressed} disabled={!t.on}>
                        {t.icon}
                        <ToolLabel>
                          {t.lines.map((l) => (
                            <span key={l}>{l}</span>
                          ))}
                        </ToolLabel>
                      </ToolButton>
                    ))}
                  </ToolSet>
                ))}
              </ToolRow>
              <GroupLabel>{g.label}</GroupLabel>
            </ToolGroup>
          ))}
        </Toolbar>
        <Body>
          <Sidebar>
            <Brand aria-hidden="true">JProfiler</Brand>
            {sideTop.map((s) => (
              <SideItem key={s.label}>
                {s.icon}
                {s.label}
              </SideItem>
            ))}
            <SubItems>
              <SubItem $selected>Current Object Set</SubItem>
              <SubItem>Thread Dump</SubItem>
            </SubItems>
            {sideBottom.map((s) => (
              <SideItem key={s.label}>
                {s.icon}
                {s.label}
              </SideItem>
            ))}
          </Sidebar>
          <Main>
            <Tabs>
              {tabs.map((t, i) => (
                <Tab key={t.label} $active={i === 0}>
                  {t.icon}
                  {t.label}
                </Tab>
              ))}
            </Tabs>
            <Summary>
              <Heading>Current object set:</Heading>
              <Heading as="p">830,125 objects in 413 classes</Heading>
              <SummaryNote>1 selection step, 17 MB shallow size</SummaryNote>
            </Summary>
            <Controls>
              <Dropdown>
                <ClassIcon />
                <DropdownSelect aria-label="Aggregation">
                  <option>Classes</option>
                </DropdownSelect>
                <ChevronDown />
              </Dropdown>
              <PushButton $width={114}>
                Use ...
                <Triangle fill="#000" />
              </PushButton>
              <PushButton $width={272}>
                <LoaderIcon />
                Group By Class Loaders
              </PushButton>
              <RetainedLink href="#retained">Calculate estimated retained sizes</RetainedLink>
            </Controls>
            <TableFrame>
              <TableViewport>
                <DataTable>
                  <colgroup>
                    <col />
                    <NumberCol $width={478} />
                    <NumberCol $width={180} />
                  </colgroup>
                  <thead>
                    <tr>
                      <HeadCell>Name</HeadCell>
                      <HeadCell>
                        <SortableHead>
                          Instance Count
                          <Triangle fill="#6b6b6b" />
                        </SortableHead>
                      </HeadCell>
                      <HeadCell>Size</HeadCell>
                    </tr>
                  </thead>
                  <tbody>
                    {rows.map(([name, count, size]) => (
                      <tr key={name}>
                        <Cell>{name}</Cell>
                        <Cell>
                          <CountCell>
                            <Bar style={{ width: barWidth(count) }} />
                            {count.toLocaleString("en-US")}
                          </CountCell>
                        </Cell>
                        <Cell $right>{size}</Cell>
                      </tr>
                    ))}
                  </tbody>
                  <tfoot>
                    <tr>
                      <TotalCell $bold>Total:</TotalCell>
                      <TotalCell>830,125</TotalCell>
                      <TotalCell $right>17,571 kB</TotalCell>
                    </tr>
                  </tfoot>
                </DataTable>
              </TableViewport>
              <ScrollTrack>
                <ScrollThumb />
              </ScrollTrack>
              <Highlight />
            </TableFrame>
            <FilterRow>
              <FilterBox>
                <SearchIcon />
                <FilterInput aria-label="Class View Filters" placeholder="Class View Filters" />
                <ChevronDown />
              </FilterBox>
              <IconButton aria-label="Help on filters">
                <HelpIcon s={24} />
              </IconButton>
            </FilterRow>
            <Details>
              <p>
                <Link href="#step-1">Selection step 1 :</Link> All objects after full GC, retaining soft references
              </p>
              <p>830,125 objects in 413 classes</p>
            </Details>
          </Main>
        </Body>
      </AppWindow>
      <Taskbar>
        <TaskSide>
          <Task $width={16} $after={15} aria-label="Start"><WindowsIcon /></Task>
          <Task $width={54} aria-label="Search"><CortanaIcon /></Task>
          <Task $width={54} $after={11} aria-label="Task view"><TaskViewIcon /></Task>
          <RunningTask $width={43} $after={14} aria-label="Chrome"><ChromeIcon /></RunningTask>
          <RunningTask $width={43} $after={14} aria-label="IntelliJ IDEA"><IntellijIcon /></RunningTask>
          <RunningTask $width={43} $after={14} aria-label="Panel"><PanelIcon /></RunningTask>
          <RunningTask $width={43} $after={8} aria-label="File Explorer"><ExplorerIcon /></RunningTask>
          <RunningTask $width={55} $active aria-label="JProfiler"><GaugeLogo /></RunningTask>
        </TaskSide>
        <TaskSide>
          <Task $width={30} aria-label="People"><PeopleIcon /></Task>
          <Task $width={60} $after={25} aria-label="Hidden icons"><TrayChevron /></Task>
          <Task $width={34} aria-label="Battery"><BatteryIcon /></Task>
          <Task $width={43} aria-label="Network"><WifiIcon /></Task>
          <Task $width={24} aria-label="Volume"><SpeakerIcon /></Task>
          <TrayText>中</TrayText>
          <Task $width={44} aria-label="Input method"><SogouIcon /></Task>
          <Clock>20</Clock>
        </TaskSide>
        <UrlMark>https://blog.csdn.net/weixin_43696529</UrlMark>
      </Taskbar>
    </Desktop>
  );
}
